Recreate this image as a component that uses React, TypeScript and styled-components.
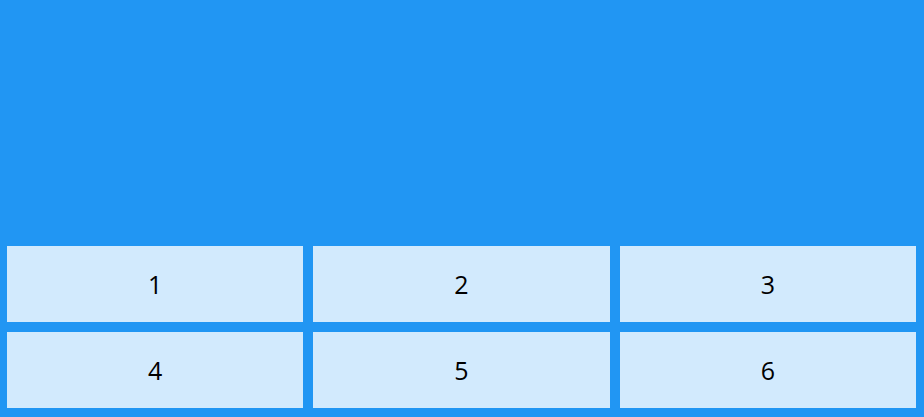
import React from "react";
import styled, { createGlobalStyle } from "styled-components";

const GlobalStyle = createGlobalStyle`
  html, body {
    margin: 0;
    padding: 0;
  }
  body {
    font-family: "Open Sans", "Liberation Sans", sans-serif;
  }
`;

const Page = styled.div`
  height: 417px;
  background-color: #2196f3;
  display: flex;
  flex-direction: column;
  justify-content: flex-end;
`;

const GridContainer = styled.div`
  display: grid;
  grid-template-columns: repeat(3, 1fr);
  gap: 10px;
  padding: 0 8px 9px 7px;
`;

const GridItem = styled.div`
  height: 76px;
  display: flex;
  align-items: center;
  justify-content: center;
  background-color: rgba(255, 255, 255, 0.8);
  color: #000;
  font-size: 25px;
`;

const items = [1, 2, 3, 4, 5, 6];

export default function App() {
  return (
    <>
      <GlobalStyle />
      <Page>
        <GridContainer>
          {items.map((n) => (
            <GridItem key={n}>{n}</GridItem>
          ))}
        </GridContainer>
      </Page>
    </>
  );
}
